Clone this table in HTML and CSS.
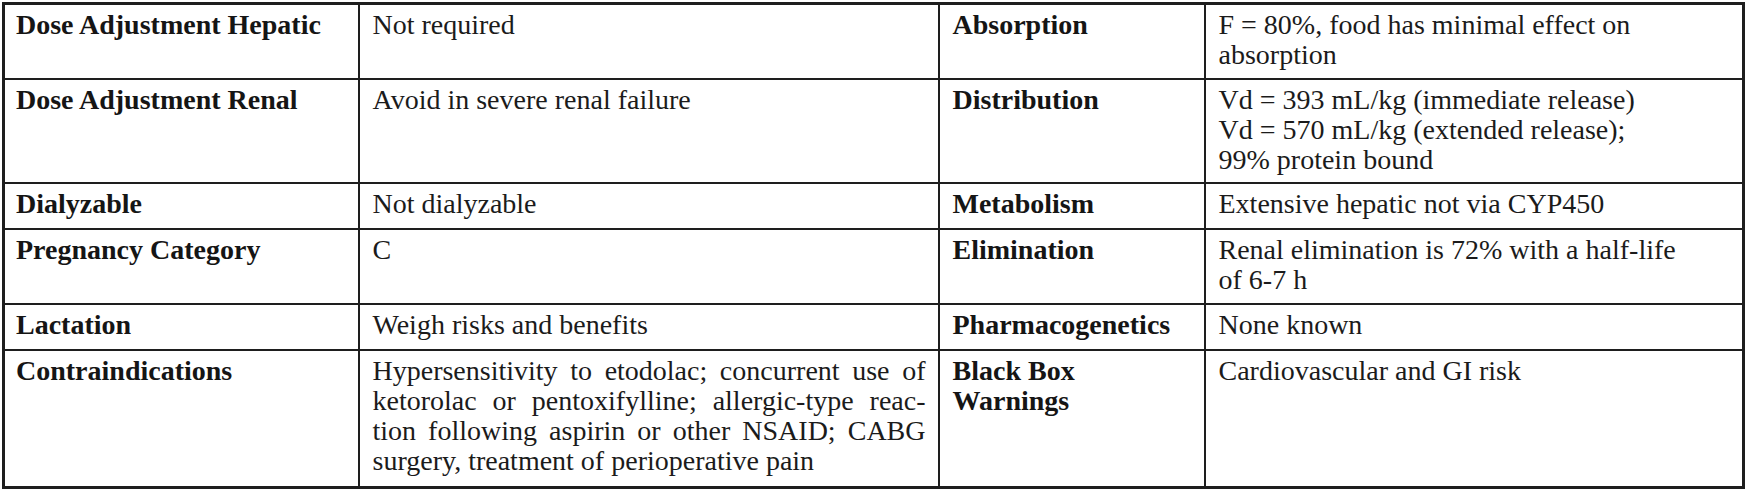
FILE: index.html
```html
<!DOCTYPE html>
<html>
<head>
<meta charset="utf-8">
<link rel="stylesheet" href="styles.css">
</head>
<body>
<table class="drug">
  <colgroup>
    <col class="c1">
    <col class="c2">
    <col class="c3">
    <col class="c4">
  </colgroup>
  <tbody>
    <tr class="r1">
      <th>Dose Adjustment Hepatic</th>
      <td>Not required</td>
      <th>Absorption</th>
      <td>F = 80%, food has minimal effect on<br>absorption</td>
    </tr>
    <tr class="r2">
      <th>Dose Adjustment Renal</th>
      <td>Avoid in severe renal failure</td>
      <th>Distribution</th>
      <td>Vd = 393 mL/kg (immediate release)<br>Vd = 570 mL/kg (extended release);<br>99% protein bound</td>
    </tr>
    <tr class="r3">
      <th>Dialyzable</th>
      <td>Not dialyzable</td>
      <th>Metabolism</th>
      <td>Extensive hepatic not via CYP450</td>
    </tr>
    <tr class="r4">
      <th>Pregnancy Category</th>
      <td>C</td>
      <th>Elimination</th>
      <td>Renal elimination is 72% with a half-life<br>of 6-7 h</td>
    </tr>
    <tr class="r5">
      <th>Lactation</th>
      <td>Weigh risks and benefits</td>
      <th>Pharmacogenetics</th>
      <td>None known</td>
    </tr>
    <tr class="r6">
      <th>Contraindications</th>
      <td>
        <span class="jl">Hypersensitivity to etodolac; concurrent use of</span>
        <span class="jl">ketorolac or pentoxifylline; allergic-type reac-</span>
        <span class="jl">tion following aspirin or other NSAID; CABG</span>
        <span class="ll">surgery, treatment of perioperative pain</span>
      </td>
      <th>Black Box<br>Warnings</th>
      <td>Cardiovascular and GI risk</td>
    </tr>
  </tbody>
</table>
</body>
</html>
```

FILE: styles.css
```css
html, body {
  margin: 0;
  padding: 0;
  background: #ffffff;
}

body {
  padding: 2px 0 0 2px;
  font-family: "Liberation Serif", "Times New Roman", serif;
  color: #1b1b1b;
}

.drug {
  border-collapse: collapse;
  table-layout: fixed;
  width: 1740px;
  border: 3px solid #1e1e1e;
}

.c1 { width: 355px; }
.c2 { width: 580px; }
.c3 { width: 266px; }
.c4 { width: 539px; }

.drug th,
.drug td {
  border: 2px solid #1e1e1e;
  vertical-align: top;
  text-align: left;
  font-size: 28px;
  line-height: 30px;
  padding: 5px 12px 0 13px;
  overflow: hidden;
}

.drug th {
  font-weight: bold;
  color: #151515;
}

.drug th:first-child {
  padding-left: 11px;
}

.r1 { height: 75px; }
.r2 { height: 104px; }
.r3 { height: 46px; }
.r4 { height: 75px; }
.r5 { height: 46px; }
.r6 { height: 138px; }

.jl {
  display: block;
  text-align: justify;
  text-align-last: justify;
}

.ll {
  display: block;
  text-align: left;
}
```
